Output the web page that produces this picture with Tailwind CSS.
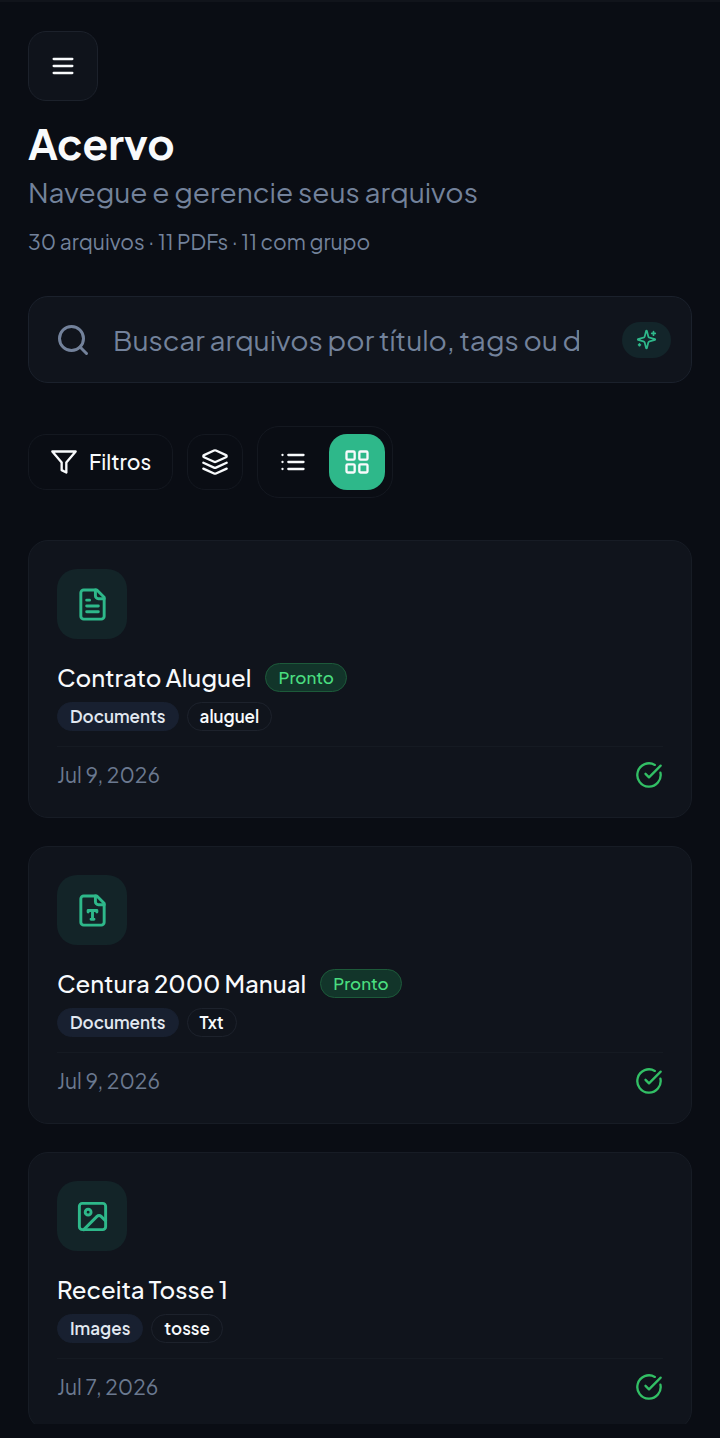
<!DOCTYPE html>
<html lang="pt-BR">
<head>
  <meta charset="UTF-8" />
  <meta name="viewport" content="width=device-width, initial-scale=1.0" />
  <title>Acervo</title>
  <script src="https://cdn.jsdelivr.net/npm/@tailwindcss/browser@4"></script>
</head>
<body class="h-screen flex flex-col overflow-hidden bg-[#0a0d14] pb-[14px] font-['Plus_Jakarta_Sans','Open_Sans',sans-serif] text-[#f8fafc]">

  <!-- Shared icons -->
  <svg class="hidden">
    <symbol id="check" viewBox="0 0 24 24"><path d="M21.801 10A10 10 0 1 1 17 3.335" /><path d="m9 11 3 3L22 4" /></symbol>
    <symbol id="file" viewBox="0 0 24 24"><path d="M15 2H6a2 2 0 0 0-2 2v16a2 2 0 0 0 2 2h12a2 2 0 0 0 2-2V7Z" /><path d="M14 2v4a2 2 0 0 0 2 2h4" /></symbol>
  </svg>

  <main class="flex-1 min-h-0 overflow-hidden border-t-2 border-[#11141b] px-7 pt-[29px]">
    <header>
      <button type="button" aria-label="Menu" class="flex items-center justify-center size-[70px] rounded-[18px] border border-[#1c212b] bg-[#0f131b]">
        <svg class="size-7" viewBox="0 0 24 24" fill="none" stroke="currentColor" stroke-width="2" stroke-linecap="round"><path d="M4 6h16M4 12h16M4 18h16" /></svg>
      </button>
      <h1 class="mt-[17px] text-[42px] leading-[50px] font-bold">Acervo</h1>
      <p class="mt-1 text-[28px] leading-[40px] text-[#73829b]">Navegue e gerencie seus arquivos</p>
      <p class="mt-[15px] text-[21px] leading-[30px] text-[#73829b]">30 arquivos · 11 PDFs · 11 com grupo</p>
    </header>

    <div class="mt-[39px] flex items-center h-[87px] rounded-[20px] border border-[#1b212c] bg-[#10141c] pl-[26px] pr-5">
      <svg class="size-9 shrink-0 text-[#73829b]" viewBox="0 0 24 24" fill="none" stroke="currentColor" stroke-width="2" stroke-linecap="round"><circle cx="11" cy="11" r="8" /><path d="m21 21-4.3-4.3" /></svg>
      <input type="text" aria-label="Buscar arquivos" placeholder="Buscar arquivos por título, tags ou descrição" class="ml-[22px] mr-[43px] min-w-0 flex-1 bg-transparent text-[28px] leading-10 outline-none placeholder:text-[#73829b]" />
      <button type="button" aria-label="Busca inteligente" class="flex items-center justify-center w-[49px] h-9 shrink-0 rounded-full bg-[#13252a] text-[#2eb88a]">
        <svg class="size-[21px]" viewBox="0 0 24 24" fill="none" stroke="currentColor" stroke-width="2" stroke-linecap="round" stroke-linejoin="round"><path d="M9.937 15.5A2 2 0 0 0 8.5 14.063l-6.135-1.582a.5.5 0 0 1 0-.962L8.5 9.936A2 2 0 0 0 9.937 8.5l1.582-6.135a.5.5 0 0 1 .963 0L14.063 8.5A2 2 0 0 0 15.5 9.937l6.135 1.581a.5.5 0 0 1 0 .964L15.5 14.063a2 2 0 0 0-1.437 1.437l-1.582 6.135a.5.5 0 0 1-.963 0z" /><path d="M20 3v4M22 5h-4M4 17v2M5 18H3" /></svg>
      </button>
    </div>

    <div class="mt-[43px] flex items-center gap-[14px]">
      <button type="button" class="flex items-center gap-[11px] h-14 rounded-[18px] border border-[#141820] px-[21px] text-[21px] leading-[30px] font-medium">
        <svg class="size-7" viewBox="0 0 24 24" fill="none" stroke="currentColor" stroke-width="2" stroke-linecap="round" stroke-linejoin="round"><path d="M22 3H2l8 9.46V19l4 2v-8.54L22 3z" /></svg>
        Filtros
      </button>
      <button type="button" aria-label="Agrupar" class="flex items-center justify-center size-14 rounded-[18px] border border-[#141820]">
        <svg class="size-7" viewBox="0 0 24 24" fill="none" stroke="currentColor" stroke-width="2" stroke-linecap="round" stroke-linejoin="round"><path d="m12.83 2.18a2 2 0 0 0-1.66 0L2.6 6.08a1 1 0 0 0 0 1.83l8.58 3.91a2 2 0 0 0 1.66 0l8.58-3.9a1 1 0 0 0 0-1.83Z" /><path d="m22 12.65-9.17 4.16a2 2 0 0 1-1.66 0L2 12.65" /><path d="m22 17.65-9.17 4.16a2 2 0 0 1-1.66 0L2 17.65" /></svg>
      </button>
      <div class="flex rounded-[22px] border border-[#141820] p-[7px] gap-[8px]">
        <button type="button" aria-label="Lista" class="flex items-center justify-center size-14 rounded-[18px]">
          <svg class="size-7" viewBox="0 0 24 24" fill="none" stroke="currentColor" stroke-width="2" stroke-linecap="round"><path d="M8 6h13M8 12h13M8 18h13M3 6h.01M3 12h.01M3 18h.01" /></svg>
        </button>
        <button type="button" aria-label="Grade" class="flex items-center justify-center size-14 rounded-[18px] bg-[#2eb88a]">
          <svg class="size-7" viewBox="0 0 24 24" fill="none" stroke="currentColor" stroke-width="2"><rect x="3" y="3" width="7" height="7" rx="1" /><rect x="14" y="3" width="7" height="7" rx="1" /><rect x="14" y="14" width="7" height="7" rx="1" /><rect x="3" y="14" width="7" height="7" rx="1" /></svg>
        </button>
      </div>
    </div>

    <section class="mt-[42px] grid gap-7">
      <article class="rounded-[20px] border border-[#171c25] bg-[#10141c] p-7">
        <div class="flex items-center justify-center size-[70px] rounded-[20px] bg-[#132428] text-[#2eb88a]">
          <svg class="size-[35px]" viewBox="0 0 24 24" fill="none" stroke="currentColor" stroke-width="2" stroke-linecap="round" stroke-linejoin="round"><use href="#file" /><path d="M10 9H8M16 13H8M16 17H8" /></svg>
        </div>
        <div class="mt-5 flex items-center gap-[14px]">
          <h2 class="text-[24px] leading-9 font-medium">Contrato Aluguel</h2>
          <span class="rounded-full border border-[#1d5a3a] bg-[#12352a] px-3 text-[17px] leading-[27px] font-medium text-[#4ade80]">Pronto</span>
        </div>
        <div class="mt-[7px] flex gap-2 text-[17px] leading-[27px] font-semibold">
          <span class="rounded-full border border-[#182030] bg-[#182030] px-3 text-[#e2e8f0]">Documents</span>
          <span class="rounded-full border border-[#1d222c] px-3">aluguel</span>
        </div>
        <div class="mt-[15px] flex items-center justify-between border-t border-[#151a22] pt-[14px]">
          <time datetime="2026-07-09" class="text-[21px] leading-7 text-[#6b7990]">Jul 9, 2026</time>
          <svg class="size-7 text-[#32bf65]" fill="none" stroke="currentColor" stroke-width="2" stroke-linecap="round" stroke-linejoin="round"><use href="#check" /></svg>
        </div>
      </article>

      <article class="rounded-[20px] border border-[#171c25] bg-[#10141c] p-7">
        <div class="flex items-center justify-center size-[70px] rounded-[20px] bg-[#132428] text-[#2eb88a]">
          <svg class="size-[35px]" viewBox="0 0 24 24" fill="none" stroke="currentColor" stroke-width="2" stroke-linecap="round" stroke-linejoin="round"><use href="#file" /><path d="M9 13v-1h6v1M12 12v6M11 18h2" /></svg>
        </div>
        <div class="mt-5 flex items-center gap-[14px]">
          <h2 class="text-[24px] leading-9 font-medium">Centura 2000 Manual</h2>
          <span class="rounded-full border border-[#1d5a3a] bg-[#12352a] px-3 text-[17px] leading-[27px] font-medium text-[#4ade80]">Pronto</span>
        </div>
        <div class="mt-[7px] flex gap-2 text-[17px] leading-[27px] font-semibold">
          <span class="rounded-full border border-[#182030] bg-[#182030] px-3 text-[#e2e8f0]">Documents</span>
          <span class="rounded-full border border-[#1d222c] px-3">Txt</span>
        </div>
        <div class="mt-[15px] flex items-center justify-between border-t border-[#151a22] pt-[14px]">
          <time datetime="2026-07-09" class="text-[21px] leading-7 text-[#6b7990]">Jul 9, 2026</time>
          <svg class="size-7 text-[#32bf65]" fill="none" stroke="currentColor" stroke-width="2" stroke-linecap="round" stroke-linejoin="round"><use href="#check" /></svg>
        </div>
      </article>

      <article class="rounded-[20px] border border-[#171c25] bg-[#10141c] p-7">
        <div class="flex items-center justify-center size-[70px] rounded-[20px] bg-[#132428] text-[#2eb88a]">
          <svg class="size-[35px]" viewBox="0 0 24 24" fill="none" stroke="currentColor" stroke-width="2" stroke-linecap="round" stroke-linejoin="round"><rect x="3" y="3" width="18" height="18" rx="2" /><circle cx="9" cy="9" r="2" /><path d="m21 15-3.086-3.086a2 2 0 0 0-2.828 0L6 21" /></svg>
        </div>
        <div class="mt-5 flex items-center gap-[14px]">
          <h2 class="text-[24px] leading-9 font-medium">Receita Tosse 1</h2>
        </div>
        <div class="mt-[7px] flex gap-2 text-[17px] leading-[27px] font-semibold">
          <span class="rounded-full border border-[#182030] bg-[#182030] px-3 text-[#e2e8f0]">Images</span>
          <span class="rounded-full border border-[#1d222c] px-3">tosse</span>
        </div>
        <div class="mt-[15px] flex items-center justify-between border-t border-[#151a22] pt-[14px]">
          <time datetime="2026-07-07" class="text-[21px] leading-7 text-[#6b7990]">Jul 7, 2026</time>
          <svg class="size-7 text-[#32bf65]" fill="none" stroke="currentColor" stroke-width="2" stroke-linecap="round" stroke-linejoin="round"><use href="#check" /></svg>
        </div>
      </article>
    </section>
  </main>
</body>
</html>
